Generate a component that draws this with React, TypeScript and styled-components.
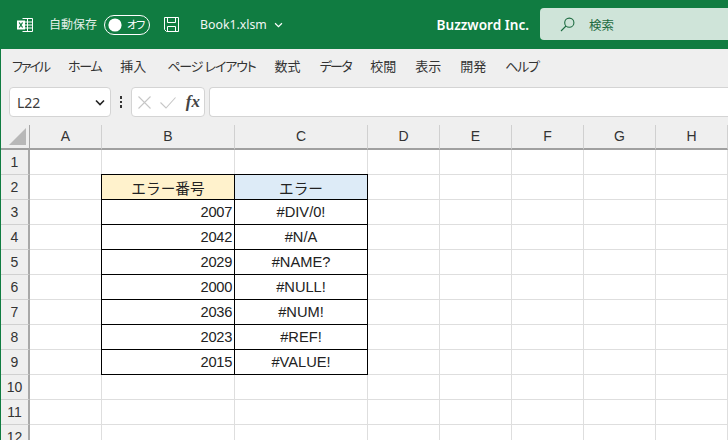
import React from 'react';
import styled, { createGlobalStyle } from 'styled-components';

const Global = createGlobalStyle`
  html, body { margin: 0; padding: 0; width: 728px; height: 440px; overflow: hidden; background: #fff; }
  * { box-sizing: border-box; }
`;
const CJK = `"Noto Sans", "Noto Sans CJK JP", sans-serif`;
const CELL = `"Liberation Sans", "Noto Sans CJK JP", sans-serif`;

const Page = styled.div`
  width: 728px; height: 440px; overflow: hidden; display: flex; flex-direction: column;
  font-family: ${CJK}; background: #fff;
`;
const TitleBar = styled.header`
  height: 49px; flex: none; background: #107c41; color: #fff; display: flex; align-items: center;
  padding: 0 0 0 17px;
`;
const Logo = styled.svg`width: 16px; height: 16px; flex: none; margin-right: 16px;`;
const AutoSave = styled.span`font-size: 12px; color: #e4efe9; margin-right: 7px; line-height: 16px; white-space: nowrap;`;
const Toggle = styled.div`
  width: 46px; height: 20px; border: 1px solid #fff; border-radius: 10px; display: flex; align-items: center;
  padding-left: 4px; gap: 6px; margin-right: 13px; flex: none;
`;
const Knob = styled.span`width: 12px; height: 12px; flex: none; border-radius: 50%; background: #fff; transform: scale(1.1);`;
const ToggleLabel = styled.span`font-size: 11px; line-height: 14px; color: #fff; white-space: nowrap; letter-spacing: -1px; font-feature-settings: "palt";`;
const SaveIcon = styled.svg`width: 17px; height: 17px; flex: none; margin-right: 20px;`;
const FileName = styled.span`font-size: 12.3px; color: #f2f7f4; margin-right: 7px;`;
const Chevron = styled.svg`width: 9px; height: 6px; flex: none;`;
const Company = styled.span`margin-left: auto; font-size: 13.6px; font-weight: 600; color: #fff; margin-right: 11px; font-family: "Noto Sans", sans-serif;`;
const Search = styled.div`
  width: 188px; height: 32px; margin-bottom: 1px; background: #cfe4d9; border-radius: 4px 0 0 4px; display: flex;
  align-items: center; padding-left: 20px; color: #1d6b41; font-size: 12.5px; flex: none;
`;
const SearchIcon = styled.svg`width: 15px; height: 15px; margin-right: 14px; flex: none;`;

const Ribbon = styled.div`
  height: 76px; flex: none; background: #efefef; border-left: 1px solid #107c41; display: flex; flex-direction: column;
`;
const Menu = styled.nav`
  height: 38px; flex: none; display: flex; align-items: center; padding: 0 0 6px 11px; font-size: 13px; color: #333; gap: 19px;
  font-feature-settings: "palt";
`;
const MenuItem = styled.span<{ $squeeze: number; $lead?: number }>`
  white-space: nowrap;
  letter-spacing: ${p => -p.$squeeze}px;
  margin-left: ${p => p.$lead || 0}px;
`;
const FormulaRow = styled.div`display: flex; align-items: flex-start; height: 38px; padding-left: 8px;`;
const Box = styled.div`
  height: 30px; background: #fff; border: 1px solid #d4d4d4; border-radius: 4px; display: flex; align-items: center; flex: none;
`;
const NameBox = styled(Box)`
  width: 102px; padding: 0 5px 0 7px; justify-content: space-between; font-size: 14px; color: #3b3b3b;
`;
const Dots = styled.div`width: 20px; flex: none; height: 30px; display: flex; flex-direction: column; align-items: center; justify-content: center; gap: 2px;`;
const Dot = styled.i`width: 2.4px; height: 2.4px; background: #333; display: block;`;
const Actions = styled(Box)`width: 74px; padding: 0 4px 0 6px; justify-content: space-between;`;
const CancelIcon = styled.svg`width: 13px; height: 13px; flex: none;`;
const CheckIcon = styled.svg`width: 16px; height: 13px; flex: none;`;
const Fx = styled.span`font-family: "Liberation Serif", serif; font-style: italic; font-weight: 700; font-size: 17px; color: #444; line-height: 16px;`;
const FormulaInput = styled(Box)`flex: 1; margin-left: 4px; border-right: 0; border-radius: 4px 0 0 4px;`;

const Sheet = styled.div`
  flex: 1; display: grid; grid-template-columns: 29px 72px 133px 133px 72px 72px 72px 72px 72px;
  grid-auto-rows: 25px; border-left: 1px solid #107c41; overflow: hidden; background: #fff;
  font-family: ${CELL};
`;
const Corner = styled.div`
  background: #efefef; border-right: 1px solid #a8a8a8; border-bottom: 2px solid #a0a0a0;
  display: flex; align-items: flex-end; justify-content: flex-end; padding: 0 3px 3px 0;
`;
const CornerMark = styled.svg`width: 17px; height: 17px;`;
const ColHead = styled.div`
  background: #efefef; border-right: 1px solid #d0d0d0; border-bottom: 2px solid #a0a0a0; color: #333;
  font-size: 14px; display: flex; align-items: center; justify-content: center; padding-bottom: 1px;
`;
const RowHead = styled.div`
  background: #efefef; border-right: 2px solid #a8a8a8; border-bottom: 1px solid #d0d0d0; color: #333;
  font-size: 14px; display: flex; align-items: center; justify-content: center;
`;
const Cell = styled.div<{ $bg?: string; $align?: string; $table?: boolean }>`
  border-right: 1px solid ${p => (p.$table ? '#000' : '#dedede')};
  border-bottom: 1px solid ${p => (p.$table ? '#000' : '#dedede')};
  background: ${p => p.$bg || 'transparent'};
  display: flex; align-items: center; justify-content: ${p => p.$align || 'center'};
  font-size: 14.67px; color: #222; padding: 0 2px; white-space: nowrap;
`;
const NumberCell = styled(Cell)`box-shadow: -1px 0 0 #000; letter-spacing: -0.3px;`;
const HeaderTextCell = styled(Cell)`box-shadow: 0 -1px 0 #000;`;
const HeaderLeftCell = styled(Cell)`box-shadow: -1px 0 0 #000, 0 -1px 0 #000, -1px -1px 0 #000;`;

const cols = ['A', 'B', 'C', 'D', 'E', 'F', 'G', 'H'];
const menu: { label: string; squeeze: number; lead?: number }[] = [
  { label: 'ファイル', squeeze: 2 },
  { label: 'ホーム', squeeze: 1.3 },
  { label: '挿入', squeeze: 0 },
  { label: 'ページ レイアウト', squeeze: 1.15, lead: 2 },
  { label: '数式', squeeze: 0 },
  { label: 'データ', squeeze: 1.6 },
  { label: '校閲', squeeze: 0 },
  { label: '表示', squeeze: 0 },
  { label: '開発', squeeze: 0 },
  { label: 'ヘルプ', squeeze: 1.3 },
];
const data: [string, string][] = [
  ['2007', '#DIV/0!'], ['2042', '#N/A'], ['2029', '#NAME?'], ['2000', '#NULL!'],
  ['2036', '#NUM!'], ['2023', '#REF!'], ['2015', '#VALUE!'],
];

function Row({ n }: { n: number }) {
  const item = n >= 3 && n <= 9 ? data[n - 3] : null;
  const empties = Array.from({ length: 5 }, (_, i) => <Cell key={i} />);
  return (
    <>
      <RowHead>{n}</RowHead>
      <Cell />
      {n === 2 ? (
        <>
          <HeaderLeftCell $table $bg="#fff2cc">エラー番号</HeaderLeftCell>
          <HeaderTextCell $table $bg="#ddebf7">エラー</HeaderTextCell>
        </>
      ) : item ? (
        <>
          <NumberCell $table $align="flex-end">{item[0]}</NumberCell>
          <Cell $table>{item[1]}</Cell>
        </>
      ) : (
        <>
          <Cell />
          <Cell />
        </>
      )}
      {empties}
    </>
  );
}

export default function App() {
  return (
    <Page>
      <Global />
      <TitleBar>
        <Logo viewBox="0 0 16 16" fill="none">
          <path d="M5.5 1.5h10v13h-10M5.5 5h10M5.5 8h10M5.5 11h10M10.5 1.5v13" stroke="#fff" strokeWidth="1" />
          <rect x="0" y="3.5" width="8" height="9" fill="#fff" />
          <path d="M2.2 5.5l3.4 5M5.6 5.5l-3.4 5" stroke="#107c41" strokeWidth="1.3" />
        </Logo>
        <AutoSave>自動保存</AutoSave>
        <Toggle>
          <Knob />
          <ToggleLabel>オフ</ToggleLabel>
        </Toggle>
        <SaveIcon viewBox="0 0 17 17" fill="none" stroke="#fff" strokeWidth="1">
          <path d="M1.5 1.5h14v14h-12l-2-2z" />
          <path d="M4.5 1.5v5h8v-5M4.5 15.5v-5h8v5" />
        </SaveIcon>
        <FileName>Book1.xlsm</FileName>
        <Chevron viewBox="0 0 10 7" fill="none" stroke="#fff" strokeWidth="1.4">
          <path d="M1 1.5l4 4 4-4" />
        </Chevron>
        <Company>Buzzword Inc.</Company>
        <Search>
          <SearchIcon viewBox="0 0 15 15" fill="none" stroke="#1d6b41" strokeWidth="1.1">
            <circle cx="9.3" cy="5.7" r="4.6" />
            <path d="M6 9L1 14" />
          </SearchIcon>
          検索
        </Search>
      </TitleBar>
      <Ribbon>
        <Menu>
          {menu.map(m => <MenuItem key={m.label} $squeeze={m.squeeze} $lead={m.lead}>{m.label}</MenuItem>)}
        </Menu>
        <FormulaRow>
          <NameBox>
            L22
            <svg width="10" height="7" viewBox="0 0 10 7" fill="none" stroke="#222" strokeWidth="1.6">
              <path d="M1 1.5l4 4 4-4" />
            </svg>
          </NameBox>
          <Dots><Dot /><Dot /><Dot /></Dots>
          <Actions>
            <CancelIcon viewBox="0 0 13 13" fill="none" stroke="#c6c6c6" strokeWidth="1.1">
              <path d="M0.5 0.5l12 12M12.5 0.5l-12 12" />
            </CancelIcon>
            <CheckIcon viewBox="0 0 16 13" fill="none" stroke="#c6c6c6" strokeWidth="1.1">
              <path d="M0.5 6.5l5.5 5.5L15.5 1.5" />
            </CheckIcon>
            <Fx>fx</Fx>
          </Actions>
          <FormulaInput />
        </FormulaRow>
      </Ribbon>
      <Sheet>
        <Corner>
          <CornerMark viewBox="0 0 17 17"><path d="M17 0v17H0z" fill="#b8b8b8" /></CornerMark>
        </Corner>
        {cols.map(c => <ColHead key={c}>{c}</ColHead>)}
        {Array.from({ length: 12 }, (_, i) => <Row key={i} n={i + 1} />)}
      </Sheet>
    </Page>
  );
}
